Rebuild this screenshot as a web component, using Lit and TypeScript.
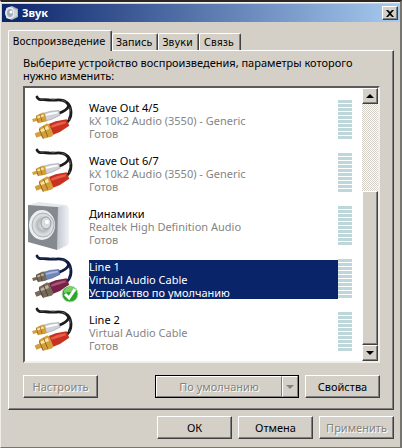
import { LitElement, html, css, svg, nothing } from "lit";
import { customElement, property } from "lit/decorators.js";
import { classMap } from "lit/directives/class-map.js";

type Kind = "cable" | "speaker";

interface Device {
  name: string;
  driver: string;
  status: string;
  kind: Kind;
  isDefault?: boolean;
}

const DEVICES: Device[] = [
  { name: "Wave Out 4/5", driver: "kX 10k2 Audio (3550) - Generic", status: "Готов", kind: "cable" },
  { name: "Wave Out 6/7", driver: "kX 10k2 Audio (3550) - Generic", status: "Готов", kind: "cable" },
  { name: "Динамики", driver: "Realtek High Definition Audio", status: "Готов", kind: "speaker" },
  { name: "Line 1", driver: "Virtual Audio Cable", status: "Устройство по умолчанию", kind: "cable", isDefault: true },
  { name: "Line 2", driver: "Virtual Audio Cable", status: "Готов", kind: "cable" },
];

const TABS = ["Воспроизведение", "Запись", "Звуки", "Связь"];

const plug = (cls: string) => svg`
  <g class=${cls}>
    <path class="sleeve" d="M9 -5 L17 -5 L28 -3 L28 3 L17 5 L9 5 Z"/>
    <path class="shine" d="M11 -3 L18 -3 L26 -2 L26 0 L11 -1 Z"/>
    <path class="gold" d="M-7 -2 L-2 -2 L-1 -5 L8 -6 L10 -5 L10 5 L8 6 L-1 5 L-2 2 L-7 2 Z"/>
    <path class="glint" d="M-6 -1 H-1 V-3 L8 -4 V-1 H0 Z"/>
    <path class="ring" d="M-1 -4 V5 M4 -5 V5"/>
  </g>`;

@customElement("device-icon")
export class DeviceIcon extends LitElement {
  @property() kind: Kind = "cable";
  @property({ type: Boolean }) selected = false;

  static styles = css`
    :host { display: block; position: relative; width: 48px; height: 48px; }
    svg { display: block; overflow: visible; }
    .wire { fill: none; stroke: #1c1c1e; stroke-width: 2.8; stroke-linecap: round; }
    .wire-shine { fill: none; stroke: #6b6c72; stroke-width: 0.8; stroke-dasharray: 4 7; }
    .gold { fill: #d39f3c; }
    .glint { fill: #fbe7a4; }
    .ring { fill: none; stroke: #8a5c14; stroke-width: 0.8; }
    .white .sleeve { fill: #d0d2da; stroke: #8a8d98; stroke-width: 0.6; }
    .white .shine { fill: #ffffff; }
    .red .sleeve { fill: #c9301f; }
    .red .shine { fill: #e8604a; }
    .selected .wire { stroke: #101b40; }
    .selected .wire-shine { stroke: #34477f; }
    .selected .gold { fill: #75695a; }
    .selected .glint { fill: #c0b098; }
    .selected .ring { stroke: #463a38; }
    .selected .white .sleeve { fill: #6f86bb; stroke: #34477f; }
    .selected .white .shine { fill: #a9bce0; }
    .selected .red .sleeve { fill: #782147; }
    .selected .red .shine { fill: #a55478; }
    .badge { position: absolute; right: -2px; bottom: -3px; }
  `;

  private cable() {
    return svg`
      <path class="wire" d="M8 4 C9 8 14 6 20 7 C27 8 32 5 37 9 C43 13 43 22 40 27 L36 32"/>
      <path class="wire" d="M39 11 C41 14 37 17 33 19 L28 21"/>
      <path class="wire-shine" d="M11 6 C18 6 28 6 33 7 C42 10 43 20 40 27"/>
      <g transform="translate(9 26) rotate(-16) scale(0.8)">${plug("white")}</g>
      <g transform="translate(13 40) rotate(-22) scale(1 1.15)">${plug("red")}</g>`;
  }

  private speaker() {
    return svg`
      <defs>
        <linearGradient id="side" x1="0" x2="1">
          <stop offset="0" stop-color="#c3c7d0"/><stop offset="1" stop-color="#f0f2f5"/>
        </linearGradient>
        <radialGradient id="cone">
          <stop offset="0" stop-color="#f3f5f6"/><stop offset="0.5" stop-color="#b5babe"/>
          <stop offset="0.85" stop-color="#dfe2e5"/><stop offset="1" stop-color="#c4c8cc"/>
        </radialGradient>
      </defs>
      <path d="M-1 6 L10 3 L37 6 L29 8 Z" fill="#e6e9ec"/>
      <path d="M28 8 L37 6 Q40 7 40 12 V42 Q40 46 37 47 L28 51 Z" fill="url(#side)"/>
      <path d="M-1 6 L29 8 L28 51 L-1 43 Z" fill="#858a90"/>
      <ellipse cx="13" cy="26" rx="13" ry="15" fill="#eceef0"/>
      <ellipse cx="14" cy="26" rx="11" ry="12" fill="url(#cone)" stroke="#b1b6bb"/>
      <ellipse cx="17" cy="24" rx="5" ry="6" fill="#d9dcdf" stroke="#969ba1"/>
      <circle cx="18" cy="23" r="2" fill="#ffffff"/>`;
  }

  render() {
    return html`
      <svg width="48" height="48" viewBox="0 0 48 48" aria-hidden="true"
        class=${classMap({ selected: this.selected })}>
        ${this.kind === "cable" ? this.cable() : this.speaker()}
      </svg>
      ${this.selected
        ? html`<svg class="badge" width="18" height="18" viewBox="0 0 18 18" aria-hidden="true">
            <circle cx="9" cy="9" r="8" fill="#2fa52c" stroke="#b5ddb0"/>
            <path d="M3 8 A6 6 0 0 1 15 7 Q9 6 3 8 Z" fill="#78cf6c"/>
            <path d="M4 9 L8 13 L14 4" fill="none" stroke="#ffffff" stroke-width="3"/>
          </svg>`
        : nothing}`;
  }
}

@customElement("level-meter")
export class LevelMeter extends LitElement {
  static styles = css`
    :host { display: grid; gap: 1px; width: 14px; }
    .bar { height: 3px; background: #bdd7da; }
  `;
  render() {
    return Array.from({ length: 10 }, () => html`<div class="bar"></div>`);
  }
}

@customElement("app-root")
export class AppRoot extends LitElement {
  static styles = css`
    :host {
      display: block;
      font: 11px/13px "Noto Sans", "DejaVu Sans Condensed", sans-serif;
      color: #000;
    }
    * { box-sizing: border-box; }
    button { font: inherit; color: inherit; padding: 0; margin: 0; border-radius: 0; }

    .window {
      display: flex;
      flex-direction: column;
      min-height: 100vh;
      background: #d4d0c8;
      border: solid;
      border-width: 2px 2px 1px 1px;
      border-color: #2c2723 #77756f #77756f #efede8;
      padding: 2px 0 0 1px;
      box-shadow: inset 0 1px #f4f2ee;
    }
    .titlebar {
      display: flex;
      align-items: center;
      height: 18px;
      padding: 0 2px;
      background: linear-gradient(90deg, #0a246a, #a6caf0);
      color: #fff;
    }
    .title { flex: 1; margin: 0 0 0 3px; font-size: 11px; line-height: 16px; font-weight: 700; }
    .raised {
      background: #d4d0c8;
      border: 1px solid;
      border-color: #fff #404040 #404040 #fff;
      box-shadow: inset -1px -1px #808080;
    }
    .close { display: grid; place-items: center; width: 16px; height: 14px; }

    .tabs {
      display: grid;
      grid-template-columns: 104px 46px 41px 42px;
      align-items: end;
      padding: 8px 0 0 6px;
    }
    .tab {
      height: 17px;
      padding: 0 2px 0 0;
      background: #d4d0c8;
      border: solid;
      border-width: 1px 1px 0 1px;
      border-color: #fff #404040 #404040 #fff;
      border-radius: 2px 2px 0 0;
      box-shadow: inset -1px 0 #808080;
      font-family: "DejaVu Sans Condensed", "Noto Sans", sans-serif;
      white-space: nowrap;
    }
    .tab.active {
      position: relative;
      height: 21px;
      margin-bottom: -1px;
    }
    .panel {
      margin: 0 6px;
      padding: 5px 13px 11px 14px;
      border: 1px solid;
      border-color: #fff #404040 #404040 #fff;
      box-shadow: inset -1px -1px #808080;
    }
    .hint { margin: 0 0 4px; }

    .listbox {
      display: flex;
      background: #fff;
      border: 2px solid;
      border-color: #5d5b57 #f1efea #f1efea #5d5b57;
    }
    .devices { flex: 1; min-width: 0; margin: 0; padding: 5px 10px 3px 4px; list-style: none; }
    .device { display: flex; align-items: flex-start; height: 53px; }
    .text { flex: 1; min-width: 0; margin: 8px 0 0 12px; color: #858585; white-space: nowrap; }
    .name { color: #000; }
    .device.selected .text { background: #0a246a; color: #fff; }
    .device.selected .name { color: #fff; }
    .meter { margin-top: 7px; }

    .scrollbar { display: flex; flex-direction: column; width: 16px; }
    .arrow { display: grid; place-items: center; width: 16px; height: 16px; }
    .track { flex: 4; background: repeating-conic-gradient(#fff 0 25%, #d4d0c8 0 50%) 0 0 / 2px 2px; }
    .thumb { flex: 7; }

    .actions, .footer { display: flex; }
    .actions { margin-top: 12px; }
    .button { width: 75px; height: 23px; }
    .button:disabled, .split button:disabled { color: #85827c; text-shadow: 1px 1px #fff; }
    .split { display: flex; width: 144px; height: 23px; margin: 0 6px 0 auto; border: 1px solid #000; }
    .split-main { flex: 1; }
    .split-arrow { display: grid; place-items: center; width: 16px; }
    .split .raised { box-shadow: none; border-color: #fff #808080 #808080 #fff; }
    .footer { justify-content: flex-end; gap: 6px; padding: 6px 6px 7px; }
  `;

  private arrow(d: string, fill = "#000") {
    return html`<svg width="8" height="4" viewBox="0 0 8 4" aria-hidden="true"><path d=${d} fill=${fill} /></svg>`;
  }

  private device(d: Device) {
    const selected = !!d.isDefault;
    return html`
      <li class=${classMap({ device: true, selected })} role="option" aria-selected=${selected}>
        <device-icon .kind=${d.kind} .selected=${selected}></device-icon>
        <div class="text">
          <div class="name">${d.name}</div>
          <div>${d.driver}</div>
          <div>${d.status}</div>
        </div>
        <level-meter class="meter"></level-meter>
      </li>`;
  }

  render() {
    return html`
      <main class="window">
        <header class="titlebar">
          <svg width="15" height="16" viewBox="0 0 15 16" aria-hidden="true">
            <path d="M2 3 L8 1 L14 4 L14 12 L8 15 L2 13 Z" fill="#aab2bf"/>
            <ellipse cx="6" cy="8" rx="5" ry="6" fill="#e4e7ec"/>
            <ellipse cx="6" cy="8" rx="3" ry="4" fill="#a3abb8"/>
            <circle cx="7" cy="7" r="1.5" fill="#fff"/>
            <path d="M10 4 L13 5 V11 L10 13 Z" fill="#cfd5de"/>
          </svg>
          <h1 class="title">Звук</h1>
          <button class="close raised" aria-label="Закрыть">
            <svg width="8" height="7" viewBox="0 0 8 7" aria-hidden="true">
              <path d="M0 0H2L4 2L6 0H8L5 3.5L8 7H6L4 5L2 7H0L3 3.5Z" fill="#000"/>
            </svg>
          </button>
        </header>

        <div class="tabs" role="tablist">
          ${TABS.map(
            (t, i) => html`<button role="tab" aria-selected=${i === 0}
              class=${classMap({ tab: true, active: i === 0 })}>${t}</button>`
          )}
        </div>

        <section class="panel" role="tabpanel">
          <p class="hint">Выберите устройство воспроизведения, параметры которого нужно изменить:</p>
          <div class="listbox">
            <ul class="devices" role="listbox" aria-label="Устройства">
              ${DEVICES.map((d) => this.device(d))}
            </ul>
            <div class="scrollbar">
              <button class="arrow raised" aria-label="Вверх">${this.arrow("M4 0 L8 4 H0 Z")}</button>
              <div class="track"></div>
              <div class="thumb raised"></div>
              <button class="arrow raised" aria-label="Вниз">${this.arrow("M0 0 H8 L4 4 Z")}</button>
            </div>
          </div>
          <div class="actions">
            <button class="button raised" disabled>Настроить</button>
            <div class="split">
              <button class="split-main raised" disabled>По умолчанию</button>
              <button class="split-arrow raised" disabled aria-label="Ещё">${this.arrow("M0 0 H8 L4 4 Z", "#85827c")}</button>
            </div>
            <button class="button raised">Свойства</button>
          </div>
        </section>

        <footer class="footer">
          <button class="button raised">ОК</button>
          <button class="button raised">Отмена</button>
          <button class="button raised" disabled>Применить</button>
        </footer>
      </main>`;
  }
}
